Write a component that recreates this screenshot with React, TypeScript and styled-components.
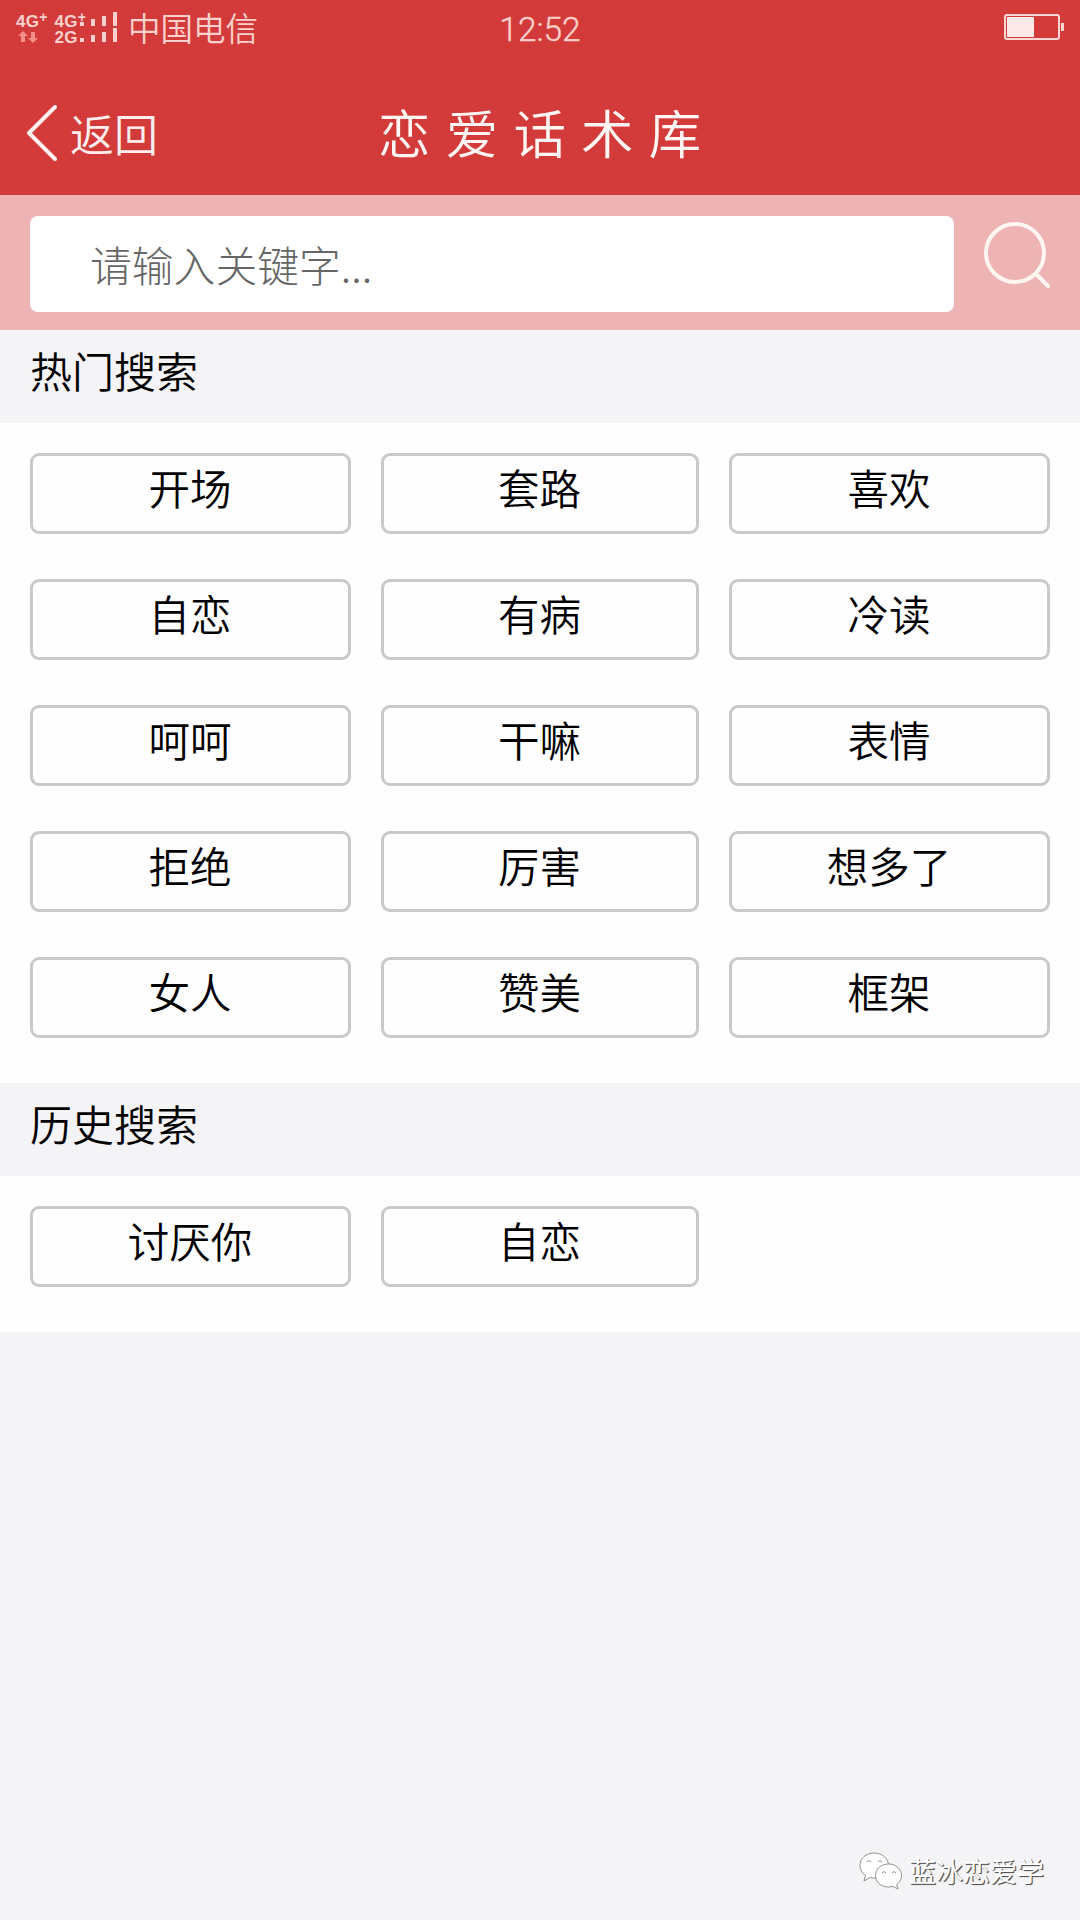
import React from 'react';
import styled, { createGlobalStyle } from 'styled-components';

const GlobalStyle = createGlobalStyle`
  * { box-sizing: border-box; }
  body {
    margin: 0;
    background: #f4f3f6;
    color: #000;
    font-family: "Noto Sans CJK SC", sans-serif;
    font-weight: 350;
  }
`;

const Page = styled.div`
  display: flex;
  flex-direction: column;
  width: 1080px;
  height: 1920px;
  overflow: hidden;
  background: #f4f3f6;
`;

const Top = styled.header`
  height: 195px;
  background: #d23b3a;
  border-bottom: 2px solid #c93f38;
`;

const StatusBar = styled.div`
  display: grid;
  grid-template-columns: 1fr 120px 1fr;
  height: 58px;
  color: #fcd0cc;
`;

const Signals = styled.div`
  display: flex;
  align-items: flex-start;
  padding-left: 16px;
`;

const Network = styled.div`
  display: flex;
  flex-direction: column;
  width: 38.500px;
  padding-top: 12px;
  font: 700 17px/16px "Liberation Sans", sans-serif;
  letter-spacing: 0.3px;
  white-space: nowrap;
`;

const Plus = styled.span`
  display: inline-block;
  font-size: 14px;
  line-height: 10px;
  vertical-align: 5px;
`;

const Arrows = styled.svg`
  display: block;
  margin: 1px 0 0 2px;
`;

const Bars = styled.svg`
  display: block;
  margin: 12px 0 0 -13px;
`;

const Carrier = styled.span`
  margin: 4px 0 0 10px;
  font-size: 32.5px;
  line-height: 46px;
`;

const Time = styled.div`
  padding-top: 10px;
  font: 300 33.5px/40px Roboto, sans-serif;
  -webkit-text-stroke: 0.4px #fcd0cc;
  text-align: center;
`;

const Battery = styled.svg`
  justify-self: end;
  margin: 14px 16px 0 0;
`;

const NavBar = styled.nav`
  display: grid;
  grid-template-columns: 1fr 340px 1fr;
  align-items: center;
  height: 137px;
  padding: 14px 0 0 26px;
  color: #ffeeee;
`;

const Back = styled.div`
  display: flex;
  align-items: center;
  gap: 12px;
  margin-top: -2px;
  font-size: 44px;
  line-height: 60px;
`;

const Title = styled.h1`
  margin: -5px 0 0 -5px;
  color: #fff5f3;
  font-size: 52.5px;
  font-weight: 350;
  line-height: 76px;
  letter-spacing: 15.2px;
  white-space: nowrap;
`;

const SearchBar = styled.div`
  display: flex;
  height: 135px;
  padding: 21px 27px 18px 30px;
  background: #eeb3b3;
`;

const SearchInput = styled.input`
  flex: none;
  width: 924px;
  height: 96px;
  padding: 0 60px;
  border: 0;
  border-radius: 8px;
  background: #fff;
  font: inherit;
  font-weight: 300;
  font-size: 41.8px;
  outline: none;
  &::placeholder { color: #666; opacity: 1; }
`;

const SearchIcon = styled.svg`
  flex: none;
  margin: 6px 0 0 29px;
`;

const SectionTitle = styled.h2`
  height: 93px;
  margin: 0;
  padding: 9px 30px;
  font-size: 42px;
  font-weight: 350;
  line-height: 62px;
`;

const Tags = styled.div`
  display: grid;
  grid-template-columns: 321px 318px 321px;
  column-gap: 30px;
  row-gap: 45px;
  padding: 30px 30px 45px;
  background: #fefefe;
`;

const Tag = styled.button`
  height: 81px;
  padding: 0 1px 13px 0;
  border: 3px solid #cac8cb;
  border-radius: 9px;
  background: #fefefe;
  color: #000;
  font: inherit;
  font-size: 41.5px;
  line-height: 60px;
  text-align: center;
`;

const Watermark = styled.footer`
  display: flex;
  align-items: center;
  gap: 7px;
  margin: auto 36px 29px auto;
  color: #fff;
  font-size: 27px;
  font-weight: 400;
  line-height: 40px;
  text-shadow: 1px 1px 0 #555, 1px 1px 1px #777;
`;

const hot = ['开场', '套路', '喜欢', '自恋', '有病', '冷读', '呵呵', '干嘛', '表情', '拒绝', '厉害', '想多了', '女人', '赞美', '框架'];
const recent = ['讨厌你', '自恋'];

function TagList({ items }: { items: string[] }) {
  return <Tags>{items.map((t) => <Tag key={t}>{t}</Tag>)}</Tags>;
}

export default function App() {
  return (
    <Page>
      <GlobalStyle />
      <Top>
        <StatusBar>
          <Signals>
            <Network>
              <span>4G<Plus>+</Plus></span>
              <Arrows width="20" height="12" viewBox="0 0 20 12" fill="#f58f88">
                <path d="M5 0l5 5H7v6H3V5H0zM15 12l-5-5h3V1h4v6h3z" />
              </Arrows>
            </Network>
            <Network>
              <span>4G<Plus>+</Plus></span>
              <span>2G</span>
            </Network>
            <Bars width="38" height="30" viewBox="0 0 38 30" fill="#fcd0cc">
              <path d="M0 10h4v4H0zM11 7h4v7h-4zM22 4h4v10h-4zM33 0h4v14h-4zM0 26h4v4H0zM11 23h4v7h-4zM22 20h4v10h-4zM33 16h4v14h-4z" />
            </Bars>
            <Carrier>中国电信</Carrier>
          </Signals>
          <Time>12:52</Time>
          <Battery width="60" height="27" viewBox="0 0 60 27">
            <rect x="1" y="1" width="54" height="24" rx="2" fill="none" stroke="#fcd8d4" strokeWidth="2" />
            <rect x="3" y="3" width="27" height="20" fill="#fde9e8" />
            <rect x="57" y="9" width="3" height="8" fill="#fcd8d4" />
          </Battery>
        </StatusBar>
        <NavBar>
          <Back>
            <svg width="32" height="56" viewBox="0 0 32 56" fill="none" stroke="#ffeeee" strokeWidth="4" strokeLinecap="round" strokeLinejoin="round">
              <path d="M29 2L3 28l26 26" />
            </svg>
            <span>返回</span>
          </Back>
          <Title>恋爱话术库</Title>
        </NavBar>
      </Top>
      <SearchBar>
        <SearchInput placeholder="请输入关键字..." />
        <SearchIcon width="70" height="70" viewBox="0 0 70 70" fill="none" stroke="#fff6f2" strokeWidth="4" strokeLinecap="round">
          <circle cx="32" cy="31" r="29" />
          <path d="M53 52l12 12" />
        </SearchIcon>
      </SearchBar>
      <SectionTitle>热门搜索</SectionTitle>
      <TagList items={hot} />
      <SectionTitle>历史搜索</SectionTitle>
      <TagList items={recent} />
      <Watermark>
        <svg width="43" height="38" viewBox="0 0 43 38" fill="#fff" stroke="#777" strokeWidth="0.8">
          <path d="M15 1C7 1 1 6.500 1 13.500c0 4 2 7.500 5.500 10L5 29l6-3.500c1.500.4 3 .5 4.500.5 8 0 14-5.500 14-12.500S23 1 15 1z" />
          <path d="M29.500 12C22 12 16.500 17 16.500 23.500S22 35 29.500 35c1.500 0 3-.2 4.300-.6L39 37l-1.300-4.500c3-2.200 4.800-5.300 4.800-9C42.500 17 37 12 29.500 12z" />
          <path d="M8 10q2-3 4 0M19 10q2-3 4 0M23 21q2-3 4 0M33 21q2-3 4 0" fill="none" />
        </svg>
        蓝冰恋爱学
      </Watermark>
    </Page>
  );
}
